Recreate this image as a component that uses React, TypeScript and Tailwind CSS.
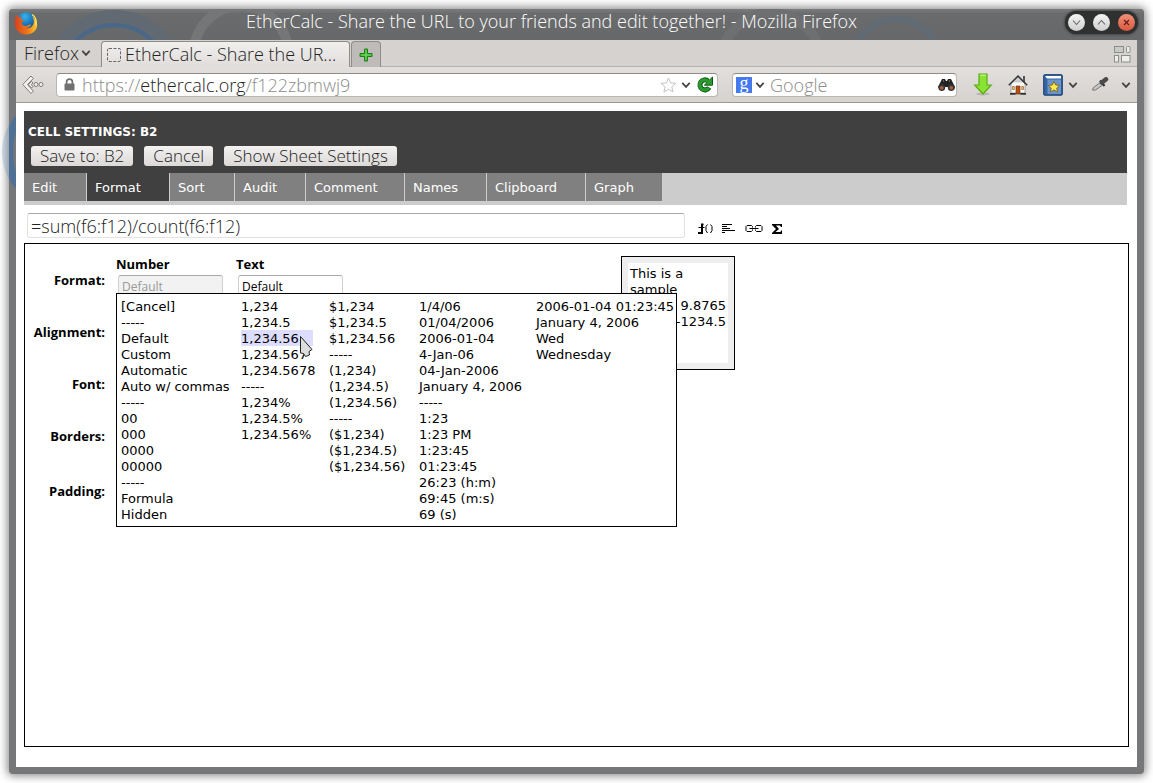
import type { ReactNode } from "react";
import clsx from "clsx";

const tabs = [
  { label: "Edit", width: "w-[63px]" },
  { label: "Format", width: "w-[83px]", active: true },
  { label: "Sort", width: "w-[65px]" },
  { label: "Audit", width: "w-[71px]" },
  { label: "Comment", width: "w-[99px]" },
  { label: "Names", width: "w-[82px]" },
  { label: "Clipboard", width: "w-[99px]" },
  { label: "Graph", width: "w-[76px]" },
];

const formatColumns = [
  ["[Cancel]", "-----", "Default", "Custom", "Automatic", "Auto w/ commas", "-----", "00", "000", "0000", "00000", "-----", "Formula", "Hidden"],
  ["1,234", "1,234.5", "1,234.56", "1,234.567", "1,234.5678", "-----", "1,234%", "1,234.5%", "1,234.56%"],
  ["$1,234", "$1,234.5", "$1,234.56", "-----", "(1,234)", "(1,234.5)", "(1,234.56)", "-----", "($1,234)", "($1,234.5)", "($1,234.56)"],
  ["1/4/06", "01/04/2006", "2006-01-04", "4-Jan-06", "04-Jan-2006", "January 4, 2006", "-----", "1:23", "1:23 PM", "1:23:45", "01:23:45", "26:23 (h:m)", "69:45 (m:s)", "69 (s)"],
  ["2006-01-04 01:23:45", "January 4, 2006", "Wed", "Wednesday"],
];

function Chevron({ className }: { className?: string }) {
  return (
    <svg width="10" height="8" viewBox="0 0 10 8" className={clsx("shrink-0", className)} aria-hidden="true">
      <path d="M1.3 1.8 5 5.8l3.7-4" fill="none" stroke="#444" strokeWidth="1.8" />
    </svg>
  );
}

function FirefoxLogo() {
  return (
    <svg width="24" height="24" viewBox="0 0 24 24" className="shrink-0" aria-hidden="true">
      <defs>
        <radialGradient id="globe" cx="45%" cy="20%" r="80%">
          <stop offset="0" stopColor="#35b5ea" />
          <stop offset="0.5" stopColor="#1b70b8" />
          <stop offset="1" stopColor="#0b2d66" />
        </radialGradient>
        <linearGradient id="fox" x1="0" y1="0" x2="1" y2="0">
          <stop offset="0" stopColor="#d8411c" />
          <stop offset="0.6" stopColor="#ee7a1d" />
          <stop offset="1" stopColor="#fbd12f" />
        </linearGradient>
      </defs>
      <circle cx="12" cy="12" r="10.6" fill="url(#globe)" />
      <path
        d="M1.5 5.5 3 3.800l1.300 2.400c1.200-.5 2.500-.4 3.600.2-.8.7-1 1.600-.6 2.400l2.700.3c-.2 1.200-1.500 1.700-2.400 2.300.3 2.800 2.800 4 5.200 3.300 1.600-.5 2.600-1.600 4.200-1.200-.7 2.200-3 3.400-5.200 3.500 3.600.9 7.200-1.300 7.900-5 .5-2.700-.4-4.600-1.700-6.400 3.200 1.900 5.200 4.800 5.200 8.100C23.200 19.400 18.300 23.500 12 23.500 5.600 23.500.800 18.700.8 12.500c0-2.700.3-5 .7-7z"
        fill="url(#fox)"
      />
      <path d="M18 3.500c3.700 2.500 4.800 6.500 3.700 10.500" fill="none" stroke="#ffe25a" strokeWidth="1.300" />
    </svg>
  );
}

function WindowButton({ label, close, children }: { label: string; close?: boolean; children: ReactNode }) {
  return (
    <button
      type="button"
      aria-label={label}
      className={clsx(
        "flex size-[17px] items-center justify-center rounded-full",
        close ? "bg-linear-to-b from-[#f09078] to-[#d8583e]" : "bg-linear-to-b from-[#f4f4f4] to-[#cfcfcf]",
      )}
    >
      <svg width="11" height="11" viewBox="0 0 11 11" fill="none" stroke={close ? "#5e1c10" : "#666"} strokeWidth="1.1">
        {children}
      </svg>
    </button>
  );
}

function TitleBar() {
  return (
    <header className="relative flex h-[31px] items-start rounded-t bg-linear-to-b from-[#7b7c7d] via-[#6a6b6c] via-15% to-[#676869] pt-0.5 pr-[6px] pl-[5px]">
      <svg width="1100" height="31" className="absolute top-0 left-0" fill="none" aria-hidden="true">
        <circle cx="105" cy="70" r="60" stroke="#616a72" strokeWidth="18" />
        <circle cx="105" cy="70" r="54" stroke="#4a6788" strokeWidth="4" />
        <circle cx="232" cy="44" r="47" stroke="#757677" strokeWidth="10" />
        <circle cx="762" cy="54" r="50" stroke="#6d6f70" strokeWidth="10" />
        <circle cx="887" cy="54" r="44" stroke="#616b76" strokeWidth="6" />
      </svg>
      <div className="relative flex w-full items-start">
        <FirefoxLogo />
        <h1 className="min-w-0 flex-1 text-center text-lg leading-5 font-light text-white">
          EtherCalc - Share the URL to your friends and edit together! - Mozilla Firefox
        </h1>
        <div className="flex h-[23px] items-center gap-2 rounded-full bg-[#2f3030] px-[3px] shadow-[0_0_3px_#222]">
          <WindowButton label="Minimize">
            <path d="M2 3.500 5.500 7.500 9 3.500" />
          </WindowButton>
          <WindowButton label="Maximize">
            <path d="M2 7.500 5.500 3.500 9 7.500" />
          </WindowButton>
          <WindowButton label="Close" close>
            <path d="m3 3 5 5M8 3l-5 5" />
          </WindowButton>
        </div>
      </div>
    </header>
  );
}

function BrowserTabs() {
  return (
    <div className="flex h-[27px] items-end border-b border-[#b5b1ad] bg-[#d6d2cf] pr-[6px] pl-2 text-lg leading-6 font-light text-[#222]">
      <button type="button" className="flex h-[26px] w-[77px] items-center gap-0.5">
        Firefox
        <Chevron />
      </button>
      <button
        type="button"
        className="-mb-px flex h-[26px] w-[249px] items-center gap-1 rounded-t border border-b-0 border-[#8f8b87] bg-linear-to-b from-[#f1f0ef] to-[#e0dcda] pl-[5px]"
      >
        <svg width="14" height="14" viewBox="0 0 14 14" className="shrink-0" aria-hidden="true">
          <rect x="0.5" y="0.5" width="13" height="13" rx="1.500" fill="none" stroke="#666" strokeDasharray="3 1.500" />
        </svg>
        <span className="pb-0.5 whitespace-nowrap">EtherCalc - Share the UR...</span>
      </button>
      <button
        type="button"
        aria-label="New tab"
        className="-mb-px ml-px flex h-[26px] w-[30px] items-center justify-center rounded-t border border-b-0 border-[#8f8b87] bg-[#bfbbb8]"
      >
        <svg width="14" height="14" viewBox="0 0 14 14">
          <path d="M5.500 1h3v4.500H13v3H8.500V13h-3V8.500H1v-3h4.500z" fill="#3ab82e" stroke="#1d8014" strokeLinejoin="round" />
          <path d="M7 2v10M2 7h10" stroke="#7bd96c" />
        </svg>
      </button>
      <button type="button" aria-label="Tab groups" className="mb-[3px] ml-auto">
        <svg width="17" height="17" viewBox="0 0 17 17" fill="#efeeec" stroke="#8c8e88">
          <rect x="0.5" y="0.5" width="9" height="6" fill="#c9cbc5" />
          <rect x="12.500" y="0.5" width="3.500" height="6" rx="1" />
          <rect x="0.5" y="9.500" width="4" height="6.500" />
          <rect x="7.500" y="9.500" width="8.500" height="6.500" />
        </svg>
      </button>
    </div>
  );
}

function NavBar() {
  return (
    <nav className="flex h-9 items-center border-b border-[#9d9a90] bg-linear-to-b from-[#e3dfdd] to-[#d6d2cf] px-[6px] text-lg leading-6 font-light text-[#8c8c8c]">
      <button type="button" aria-label="Back" className="mr-3 shrink-0">
        <svg width="22" height="20" viewBox="0 0 22 20" fill="#f4f3f2" stroke="#7c7976">
          <path d="M9 1 .8 9.500 9 18.500l2.300-2.300L5.400 9.500l5.900-6z" />
          <path d="m9.500 6.500-3.200 3 3.200 3.500 1.500-1.500-1.800-2L11 8z" />
          <circle cx="14" cy="9.500" r="2" />
          <circle cx="19" cy="9.500" r="2" />
        </svg>
      </button>
      <div className="flex h-6 min-w-0 flex-1 items-center rounded-sm border border-[#b8b5b2] border-t-[#8e8b88] bg-white pr-[3px] pl-[7px]">
        <svg width="11" height="13" viewBox="0 0 11 13" className="mr-[7px] shrink-0" aria-hidden="true">
          <path d="M2.600 6V4a2.900 2.900 0 0 1 5.800 0v2" fill="none" stroke="#707070" strokeWidth="1.700" />
          <rect x="0.500" y="5.500" width="10" height="7" rx="1" fill="#707070" />
        </svg>
        <label htmlFor="url">
          https://<span className="text-[#222]">ethercalc.org</span>
        </label>
        <input id="url" defaultValue="/f122zbmwj9" className="h-6 min-w-0 flex-1 outline-none" />
        <button type="button" aria-label="Bookmark this page">
          <svg width="17" height="16" viewBox="0 0 17 16">
            <path d="m8.500 1 2.100 4.900 5.300.4-4.100 3.500 1.300 5.200-4.600-2.800L3.900 15l1.300-5.200-4.100-3.500 5.300-.4z" fill="#fff" stroke="#c4c4c4" />
          </svg>
        </button>
        <Chevron className="mr-[5px] ml-1" />
        <button type="button" aria-label="Reload">
          <svg width="18" height="18" viewBox="0 0 18 18">
            <path d="M13.200 11.500A5 5 0 1 1 12 4.900" fill="none" stroke="#0d5a12" strokeWidth="5" />
            <path d="M16.500 1v8.200H8.300z" fill="#2a9b2e" stroke="#0d5a12" />
            <path d="M12.800 11.800A5 5 0 1 1 12 5.200l1 1" fill="none" stroke="#2a9b2e" strokeWidth="3.200" />
          </svg>
        </button>
      </div>
      <div className="ml-[14px] flex h-6 w-[225px] items-center rounded-sm border border-[#b8b5b2] border-t-[#8e8b88] bg-white pr-px pl-[3px]">
        <span className="flex size-4 shrink-0 items-center justify-center bg-[#4479f0] pb-1 font-['Liberation_Serif',serif] text-lg leading-4 font-normal text-white">
          g
        </span>
        <Chevron className="mr-[5px] ml-[3px]" />
        <input aria-label="Search" placeholder="Google" className="h-6 min-w-0 flex-1 outline-none placeholder:text-[#8c8c8c]" />
        <button type="button" aria-label="Go">
          <svg width="17" height="14" viewBox="0 0 17 14">
            <path d="M4 1h3l1 2h1l1-2h3l4 8-1 3h-4l-2-3H7l-2 3H2L0 9z" fill="#222" />
            <circle cx="3.800" cy="9.500" r="3.400" fill="#333" />
            <circle cx="13.200" cy="9.500" r="3.400" fill="#333" />
            <circle cx="3.700" cy="9.800" r="1.900" fill="#a3623f" />
            <circle cx="13.300" cy="9.800" r="1.900" fill="#a3623f" />
            <path d="M5 3h1M11 3h1" stroke="#999" />
          </svg>
        </button>
      </div>
      <button type="button" aria-label="Downloads" className="ml-4 shrink-0">
        <svg width="20" height="23" viewBox="0 0 20 23">
          <ellipse cx="10" cy="21" rx="7" ry="1.500" fill="#b9b6b3" />
          <path d="M6 1h8v11h4.300L10 21 1.700 12H6z" fill="#8ae234" stroke="#5aae11" strokeWidth="1.200" />
          <path d="M7.200 2.200h5.600" stroke="#d3f8a6" />
        </svg>
      </button>
      <button type="button" aria-label="Home" className="ml-[15px] shrink-0">
        <svg width="20" height="22" viewBox="0 0 20 22">
          <path d="M15 2h2v6h-2z" fill="#555" />
          <path d="M3 10 10 3l7 7v9H3z" fill="#faf8f4" stroke="#777" strokeWidth=".6" />
          <path d="M5 8.500 10 3.500l5 5z" fill="#c8cccd" />
          <path d="M.8 11.300 10 2l9.200 9.300" fill="none" stroke="#303638" strokeWidth="1.500" />
          <path d="M8 12h4v8H8z" fill="#b54f12" stroke="#6b2d05" strokeWidth=".6" />
          <path d="M4.500 12.500h1.800v3H4.500zM13.700 12.500h1.800v3h-1.800z" fill="#f2c786" stroke="#a3703b" strokeWidth=".8" />
          <path d="M2 19.800h5.700M12.300 19.800H18" stroke="#333" strokeWidth="1.800" />
        </svg>
      </button>
      <button type="button" aria-label="Bookmarks" className="ml-[15px] flex shrink-0 items-center gap-[5px]">
        <svg width="20" height="22" viewBox="0 0 20 22">
          <rect x="0.700" y="0.700" width="18.600" height="20.500" rx="1" fill="#3465a4" stroke="#163a6c" />
          <path d="M2 2h16v2.500H4z" fill="#fff" />
          <rect x="4.500" y="5.500" width="13.500" height="14.500" fill="#6b95c9" />
          <path d="m11 7.500 1.700 3.500 3.900.4-2.900 2.600.8 3.800-3.500-1.900-3.500 1.900.7-3.800-2.800-2.600 3.900-.4z" fill="#fce94f" stroke="#7c5b07" strokeWidth=".8" />
        </svg>
        <Chevron />
      </button>
      <button type="button" aria-label="Color picker" className="ml-[13px] shrink-0">
        <svg width="18" height="16" viewBox="0 0 18 16">
          <path d="m1.500 13 1-2.500 7-5 2 2.500-7 5z" fill="#c9c9c9" stroke="#707070" />
          <path d="m9 3.500 4.500 5.500" stroke="#333" strokeWidth="2.200" />
          <path d="m11 5.500 4-3.200" stroke="#4a4a4a" strokeWidth="4.500" strokeLinecap="round" />
        </svg>
      </button>
      <button type="button" aria-label="More tools" className="ml-3 flex shrink-0">
        <Chevron />
      </button>
    </nav>
  );
}

function ChromeButton({ children }: { children: ReactNode }) {
  return (
    <button
      type="button"
      className="h-5 rounded-[3px] bg-linear-to-b from-[#f3f2f1] to-[#dcd9d7] px-[9px] font-['Open_Sans',sans-serif] text-[17px] leading-5 font-light text-[#222]"
    >
      {children}
    </button>
  );
}

function FormulaBar() {
  return (
    <div className="flex items-end pt-2 pb-[5px] pl-[3px]">
      <input
        aria-label="Formula"
        defaultValue="=sum(f6:f12)/count(f6:f12)"
        className="h-[25px] w-[658px] rounded-[3px] border border-[#e2e2e2] border-t-[#a8a8a8] px-[3px] font-['Open_Sans',sans-serif] text-lg font-light text-[#222] outline-none"
      />
      <div className="flex items-center gap-2 pb-[3px] pl-3">
        <button type="button" aria-label="Insert function">
          <svg width="17" height="12" viewBox="0 0 17 12" fill="none" stroke="#000">
            <path d="M6.500 1.500H5V10H1" strokeWidth="2" />
            <path d="M1.500 4.500h6" />
            <path d="M10.500 1.500 9 3.500v4l1.500 2.500M13.500 1.500l1.500 2v4l-1.500 2.500" />
          </svg>
        </button>
        <button type="button" aria-label="Multi-line input">
          <svg width="15" height="12" viewBox="0 0 15 12" shapeRendering="crispEdges">
            <path d="M0 1h10v1H0zM0 3h5v1H0zM0 5h8v1H0zM0 7h13v1H0zM0 9h3v1H0z" />
          </svg>
        </button>
        <button type="button" aria-label="Insert link">
          <svg width="18" height="12" viewBox="0 0 18 12" fill="none" stroke="#000">
            <path d="M7.500 4.500v-1l-1-1H2l-1 1v4l1 1h4.500l1-1v-1M10.500 4.500v-1l1-1H16l1 1v4l-1 1h-4.500l-1-1v-1M4.500 5.500h9" />
          </svg>
        </button>
        <button type="button" aria-label="Sum">
          <svg width="12" height="12" viewBox="0 0 12 12">
            <path d="M1 1h10v3h-1L9 2.500H5L8 6 4.500 9H9.500l.5-1.500h1V11H1v-1l4-4-4-4z" />
          </svg>
        </button>
      </div>
    </div>
  );
}

function SettingRow({ label, tall, children }: { label: string; tall?: boolean; children?: ReactNode }) {
  return (
    <div className={clsx("flex", tall ? "h-[58px]" : "h-[52px]")}>
      <div className="flex w-20 shrink-0 items-center justify-end font-['Open_Sans',sans-serif] font-bold">{label}</div>
      {children}
    </div>
  );
}

function FormatField({ label, id, disabled }: { label: string; id: string; disabled?: boolean }) {
  return (
    <div className="w-[120px] pt-px font-['Open_Sans',sans-serif]">
      <label htmlFor={id} className="block leading-4 font-bold">
        {label}
      </label>
      <input
        id={id}
        defaultValue="Default"
        disabled={disabled}
        className="mt-[3px] ml-0.5 h-[22px] w-[105px] rounded-[3px] border border-[#d0d0d0] border-t-[#a8a8a8] px-[3px] text-[12px] outline-none disabled:bg-[#f2f2f2] disabled:text-[#999]"
      />
    </div>
  );
}

function FormatPopup() {
  return (
    <div className="absolute top-[49px] left-[91px] grid grid-cols-[104px_72px_74px_101px_136px] gap-4 border border-black bg-white p-1">
      {formatColumns.map((items, column) => (
        <ul key={column}>
          {items.map((item, i) => (
            <li key={i} className="h-4">
              <button
                type="button"
                className={clsx(
                  "block h-4 w-full text-left leading-[18px] whitespace-nowrap",
                  item === "1,234.56" && "bg-[#ddddff]",
                )}
              >
                {item}
              </button>
            </li>
          ))}
        </ul>
      ))}
      <svg width="14" height="24" viewBox="0 0 14 24" className="absolute top-[41px] left-[182px]" aria-hidden="true">
        <path d="M1.500 1.500v16.500l3 .5 2 3 4-1.500-.5-3.500 3-2z" fill="#ddd" stroke="#222" strokeLinejoin="round" />
      </svg>
    </div>
  );
}

function Sample() {
  return (
    <div className="mt-3 h-[114px] w-[114px] border border-black bg-[#eee] p-1.5">
      <div className="h-full bg-white px-0.5 py-[3px] leading-4">
        <p>This is a sample</p>
        <p className="text-right">9.8765</p>
        <p className="text-right">-1234.5</p>
      </div>
    </div>
  );
}

export default function App() {
  return (
    <div className="relative flex min-h-screen flex-col bg-white p-[9px] font-['Open_Sans',sans-serif]">
      <div className="flex flex-1 flex-col rounded bg-[#767778] shadow-[0_0_8px_2px_rgba(0,0,0,0.45)]">
        <TitleBar />
        <div className="mx-[7px] mb-[7px] flex flex-1 flex-col bg-white">
          <BrowserTabs />
          <NavBar />
          <main className="flex flex-1 flex-col px-2 pt-2 pb-5 font-['DejaVu_Sans',sans-serif] text-[13px] text-black">
            <div className="mr-0.5 h-[62px] bg-[#404040] pt-3 pl-1">
              <h2 className="h-4 text-[12px] leading-[18px] font-bold text-white">CELL SETTINGS: B2</h2>
              <div className="mt-[7px] flex gap-[11px] pl-[3px]">
                <ChromeButton>Save to: B2</ChromeButton>
                <ChromeButton>Cancel</ChromeButton>
                <ChromeButton>Show Sheet Settings</ChromeButton>
              </div>
            </div>
            <div className="mr-0.5 flex h-8 bg-[#ccc]">
              {tabs.map((tab) => (
                <button
                  key={tab.label}
                  type="button"
                  className={clsx(
                    "h-7 border-r border-[#ccc] pt-0.5 pl-2 text-left text-white last:border-r-0",
                    tab.width,
                    tab.active ? "bg-[#404040]" : "bg-[#808080]",
                  )}
                >
                  {tab.label}
                </button>
              ))}
            </div>
            <FormulaBar />
            <section className="relative flex flex-1 border border-black">
              <div className="w-[596px] pt-[11px]">
                <SettingRow label="Format:">
                  <div className="flex pl-[11px]">
                    <FormatField id="number-format" label="Number" disabled />
                    <FormatField id="text-format" label="Text" />
                  </div>
                </SettingRow>
                <SettingRow label="Alignment:" />
                <SettingRow label="Font:" />
                <SettingRow label="Borders:" />
                <SettingRow label="Padding:" tall />
              </div>
              <Sample />
              <FormatPopup />
            </section>
          </main>
        </div>
      </div>
      {/* desktop wallpaper showing through the window frame */}
      <svg width="16" height="120" className="pointer-events-none absolute top-[93px] left-0" fill="none" aria-hidden="true">
        <circle cx="58" cy="59" r="51" stroke="#5a83ad" strokeWidth="10" opacity="0.25" />
        <path d="M16 22.500C12 27 9 33 9 36v46c0 4 3 10 7 13.500V79c-4-13-4-27 0-40z" fill="#4f7196" />
      </svg>
    </div>
  );
}
